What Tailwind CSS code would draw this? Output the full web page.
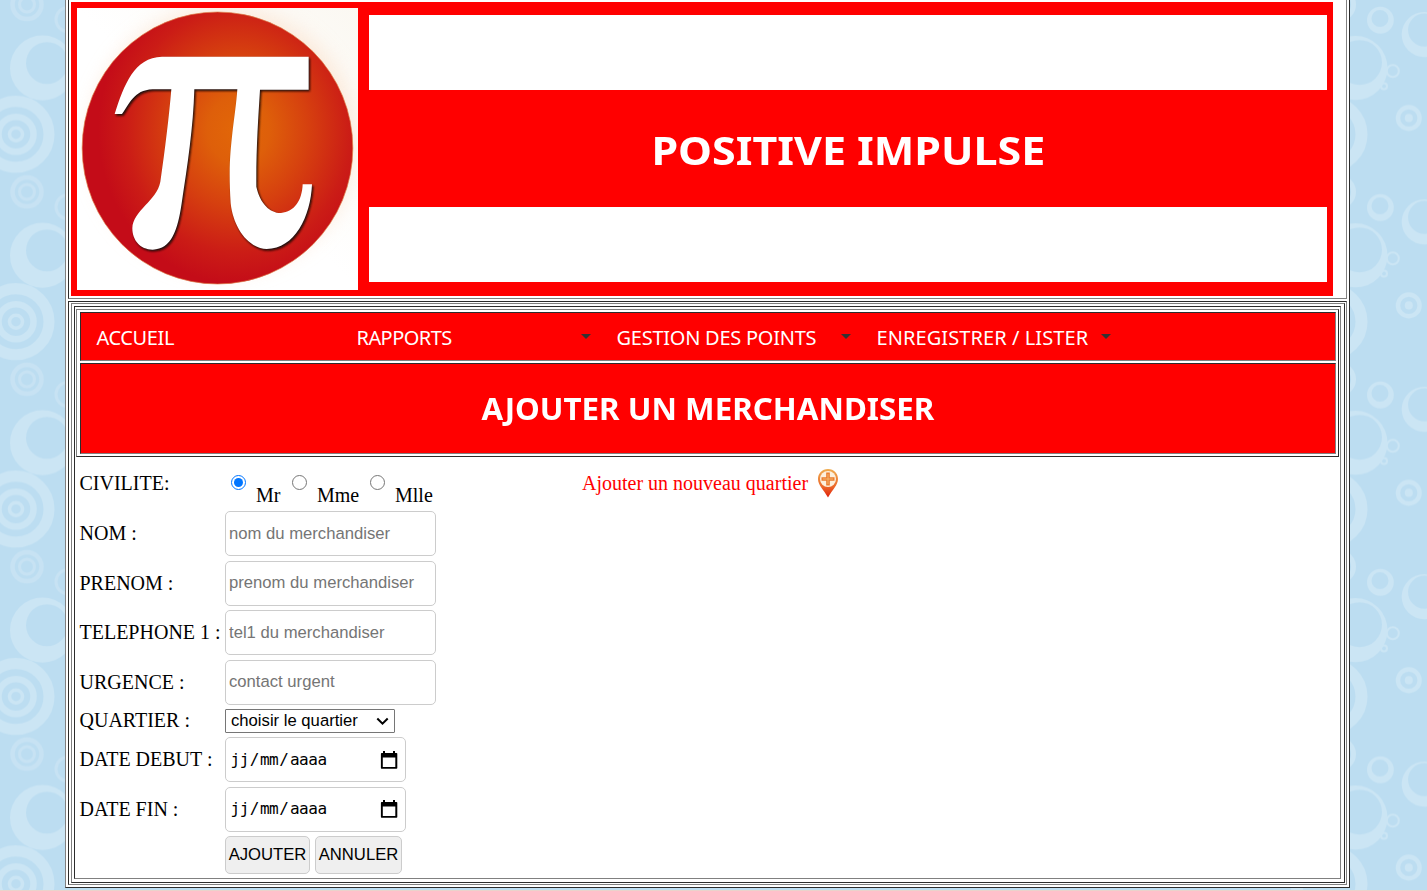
<!DOCTYPE html>
<html lang="fr">
<head>
<meta charset="utf-8">
<title>Positive Impulse</title>
<script src="https://cdn.jsdelivr.net/npm/@tailwindcss/browser@4"></script>
</head>
<body class="relative h-[891px] overflow-hidden bg-[#bcddf1] font-['Liberation_Serif',serif] text-[20px] leading-[23px] text-black">
<!-- Bubble wallpaper -->
<svg class="absolute inset-0 -z-10" width="1427" height="891" aria-hidden="true">
  <defs>
    <pattern id="bubbles" width="1427" height="187.4" patternUnits="userSpaceOnUse">
      <g fill="none" stroke="#cbe5f4">
        <circle cx="16" cy="134.3" r="33" stroke-width="11"/>
        <circle cx="16" cy="134.3" r="17.5" stroke-width="6.5"/>
        <circle cx="16" cy="134.3" r="6.5" stroke-width="3.5"/>
        <g stroke="#c7e2f3"><circle cx="27" cy="4.5" r="14.5" stroke-width="4.5"/><circle cx="27" cy="4.5" r="7.5" stroke-width="3"/>
        <circle cx="27" cy="191.9" r="14.5" stroke-width="4.5"/><circle cx="27" cy="191.9" r="7.5" stroke-width="3"/>
        <circle cx="68" cy="19.5" r="12" stroke-width="3"/></g>
        <circle cx="1329" cy="134.3" r="32.5" stroke-width="12"/>
        <circle cx="1339" cy="4.5" r="14.5" stroke-width="5"/><circle cx="1339" cy="191.9" r="14.5" stroke-width="5"/>
        <circle cx="1392.8" cy="71" r="6" stroke-width="2"/>
        <circle cx="1384" cy="86.2" r="3" stroke-width="2"/>
        <circle cx="1408.8" cy="118" r="10.8" stroke-width="4.4"/>
      </g>
      <g fill="#cbe5f4" fill-rule="evenodd">
        <path d="M10 68a32.5 32.5 0 1 0 65 0a32.5 32.5 0 1 0-65 0zM26 63a21 21 0 1 0 42 0a21 21 0 1 0-42 0z"/>
        <path d="M1323.500 68a32 32 0 1 0 64 0a32 32 0 1 0-64 0zM1337 62.500a22.500 22.500 0 1 0 45 0a22.500 22.500 0 1 0-45 0z"/>
        <path d="M1401.700 34.500a22.500 22.500 0 1 0 45 0a22.500 22.500 0 1 0-45 0zM1408 30a16.500 16.500 0 1 0 33 0a16.500 16.500 0 1 0-33 0z"/>
        <path d="M1367 20.200a13.400 13.400 0 1 0 26.800 0a13.400 13.400 0 1 0-26.800 0zM1371.500 18.500a8.500 8.500 0 1 0 17 0a8.500 8.500 0 1 0-17 0z"/>
        <circle cx="1408.800" cy="118" r="4"/>
      </g>
    </pattern>
  </defs>
  <rect width="1427" height="891" fill="url(#bubbles)"/>
  <rect y="890" width="1427" height="1" fill="#ead3cb"/>
</svg>

<div class="ml-[65px] flex h-[888px] w-[1285px] flex-col border-r border-b border-l border-[#2c2c2c] border-l-[#808080] bg-white pl-[2px]">
  <!-- Banner -->
  <header class="h-[299px] w-[1279px] shrink-0 border-r border-b border-l border-[#808080] border-l-[#2c2c2c] pt-[2px] pl-[2px]">
    <div class="flex h-[294px] w-[1262px] gap-[11px] bg-[#ff0000] p-[6px]">
      <svg class="shrink-0" width="281" height="282" viewBox="231 24 843 846" preserveAspectRatio="none" role="img">
        <defs>
          <radialGradient id="disc" gradientUnits="userSpaceOnUse" cx="715" cy="390" r="420" gradientTransform="translate(0 -39) scale(1 1.100)">
            <stop offset="0" stop-color="#e26708"/><stop offset=".22" stop-color="#de5f0a"/><stop offset=".5" stop-color="#d6400f"/><stop offset=".8" stop-color="#cb1c16"/><stop offset="1" stop-color="#c40c18"/>
          </radialGradient>
          <linearGradient id="paper" x1="0" y1="1" x2="1" y2="0"><stop offset="0.500" stop-color="#fff"/><stop offset="1" stop-color="#fbf8f2"/></linearGradient>
          <filter id="soft"><feGaussianBlur stdDeviation="2.500"/></filter>
          <filter id="glow"><feGaussianBlur stdDeviation="28"/></filter>
          <path id="pi" d="M344 342C372 255 402 172 486 170H926V269H780C775 350 768 450 769 560C780 612 812 640 843 639C883 636 906 602 908 553H936C932 650 884 747 800 747C745 745 700 684 692 610C685 500 692 450 697 400C703 350 709 310 712 268H583C580 380 562 500 545 610C533 690 515 748 458 749C420 749 397 720 397 685C399 630 470 604 481 545C495 450 507 350 514 268H458C400 270 388 315 366 342Z"/>
        </defs>
        <rect x="231" y="24" width="843" height="846" fill="url(#paper)"/>
        <circle cx="670" cy="420" r="400" fill="#fbe3cf" opacity=".7" filter="url(#glow)"/>
        <ellipse cx="652.500" cy="444" rx="406" ry="408" fill="url(#disc)" stroke="#dc7a45" stroke-width="2"/>
        <use href="#pi" x="4" y="5" fill="#1d0b07" filter="url(#soft)"/>
        <use href="#pi" fill="#fff"/>
      </svg>
      <div class="flex w-[958px] flex-col justify-between pt-[7px] pb-[8px]">
        <div class="h-[75px] bg-white"></div>
        <h1 class="flex justify-center pt-[2px] font-['Noto_Sans',sans-serif] text-[40px] leading-[50px] font-bold text-white"><span class="inline-block scale-x-[1.074]">POSITIVE IMPULSE</span></h1>
        <div class="h-[75px] bg-white"></div>
      </div>
    </div>
  </header>

  <!-- Body -->
  <main class="mt-[2px] h-[584px] w-[1279px] shrink-0 border border-[#2c2c2c] border-r-[#808080] border-b-[#808080] pt-px pl-[2px]">
    <div class="h-[580px] w-[1274px] border border-[#808080] border-r-[#2c2c2c] border-b-[#2c2c2c] pt-[2px] pl-[2px]">
      <div class="h-[573px] w-[1267px] border border-[#2c2c2c] border-r-[#808080] border-b-[#808080] pt-[2px] pl-px">
        <div class="flex h-[148px] w-[1263px] flex-col gap-[2px] border border-[#808080] border-r-[#2c2c2c] border-b-[#2c2c2c] pt-[2px] pl-[3px] font-['Noto_Sans',sans-serif] text-white">
          <nav class="flex h-[49px] w-[1256px] items-center border border-[#2c2c2c] border-r-[#808080] border-b-[#808080] bg-[#ff0000] pt-[2px] pl-[15.500px] text-[20px]">
            <div class="w-[260px]"><span class="tracking-[-0.4px]">ACCUEIL</span></div>
            <div class="flex w-[260px] items-center justify-between pr-[26px]"><span class="tracking-[-0.550px]">RAPPORTS</span><span class="-mt-[3px] border-x-[5px] border-t-[5px] border-x-transparent border-t-[#333]"></span></div>
            <div class="flex w-[260px] items-center justify-between pr-[26px]"><span class="tracking-[-0.250px]">GESTION DES POINTS</span><span class="-mt-[3px] border-x-[5px] border-t-[5px] border-x-transparent border-t-[#333]"></span></div>
            <div class="flex w-[260px] items-center justify-between pr-[26px]"><span class="tracking-[0.080px]">ENREGISTRER / LISTER</span><span class="-mt-[3px] border-x-[5px] border-t-[5px] border-x-transparent border-t-[#333]"></span></div>
          </nav>
          <div class="flex h-[91px] w-[1256px] items-center justify-center border border-[#2c2c2c] border-r-[#808080] border-b-[#808080] bg-[#ff0000]">
            <h2 class="scale-x-[1.044] text-[30px] leading-[36px] font-bold">AJOUTER UN MERCHANDISER</h2>
          </div>
        </div>

        <form class="pl-[3.500px]">
          <div class="flex h-[54px]">
            <div class="w-[145.500px] pt-[15px]">CIVILITE:</div>
            <div class="flex w-[357px] pt-[18px]">
              <input type="radio" name="civ" checked class="ml-[6px] size-[15px]"><label class="mt-[9px] ml-[10px] w-[36px]">Mr</label>
              <input type="radio" name="civ" class="size-[15px]"><label class="mt-[9px] ml-[10px] w-[53px]">Mme</label>
              <input type="radio" name="civ" class="size-[15px]"><label class="mt-[9px] ml-[10px]">Mlle</label>
            </div>
            <a class="flex items-start gap-[9px] text-[#ff0000]"><span class="pt-[15px]">Ajouter un nouveau quartier</span>
              <svg class="mt-[11px]" width="22" height="30" viewBox="0 0 22 30" aria-hidden="true">
                <defs><linearGradient id="pin" x1="0" y1="0" x2="0" y2="1"><stop offset="0" stop-color="#efad50"/><stop offset=".6" stop-color="#ec6a2a"/><stop offset="1" stop-color="#e0200c"/></linearGradient></defs>
                <path d="M11 1C5 1 1 5.500 1 11C1 17 6.500 21.500 11 29.500C15.500 21.500 21 17 21 11C21 5.500 17 1 11 1Z" fill="url(#pin)"/>
                <circle cx="11" cy="11" r="8" fill="#fdf0dc"/>
                <path d="M11 4.500v13M4.500 11h13" stroke="#ea7a2c" stroke-width="3.600"/><path d="M11 5.800v10.400M5.800 11h10.400" stroke="#f5b66c" stroke-width="1"/>
              </svg>
            </a>
          </div>
          <div class="flex h-[50px]"><label class="w-[145.500px] pt-[11px]">NOM :</label><input placeholder="nom du merchandiser" class="h-[45px] w-[211px] rounded-[5px] border border-[#ccc] px-[3px] font-['Liberation_Sans',sans-serif] text-[16.670px] placeholder:text-[#757575]"></div>
          <div class="flex h-[49px]"><label class="w-[145.500px] pt-[11px]">PRENOM :</label><input placeholder="prenom du merchandiser" class="h-[45px] w-[211px] rounded-[5px] border border-[#ccc] px-[3px] pb-[2px] font-['Liberation_Sans',sans-serif] text-[16.670px] placeholder:text-[#757575]"></div>
          <div class="flex h-[50px]"><label class="w-[145.500px] pt-[11px] whitespace-nowrap">TELEPHONE 1 :</label><input placeholder="tel1 du merchandiser" class="h-[45px] w-[211px] rounded-[5px] border border-[#ccc] px-[3px] font-['Liberation_Sans',sans-serif] text-[16.670px] placeholder:text-[#757575]"></div>
          <div class="flex h-[49px]"><label class="w-[145.500px] pt-[11px]">URGENCE :</label><input placeholder="contact urgent" class="h-[45px] w-[211px] rounded-[5px] border border-[#ccc] px-[3px] pb-[2px] font-['Liberation_Sans',sans-serif] text-[16.670px] placeholder:text-[#757575]"></div>
          <div class="flex h-[28px]"><label class="w-[145.500px]">QUARTIER :</label>
            <div class="flex h-[24px] w-[170px] items-center justify-between rounded-[1px] border border-[#767676] pr-[5px] pl-[5px] font-['Liberation_Sans',sans-serif] text-[16.670px] leading-[20px]"><span>choisir le quartier</span>
              <svg class="mt-px" width="13" height="9" viewBox="0 0 13 9" fill="none" stroke="#000" stroke-width="2"><path d="M1.300 1.500l5.200 5.200l5.200-5.200"/></svg></div>
          </div>
          <div class="flex h-[50px]"><label class="w-[145.500px] pt-[11px]">DATE DEBUT :</label>
            <div class="flex h-[45px] w-[181px] items-center justify-between rounded-[5px] border border-[#ccc] pr-[7px] pl-[3.500px] font-['DejaVu_Sans_Mono',monospace] text-[16px] tracking-[-0.480px]"><span class="flex"><span class="px-px">jj</span>/<span class="px-px">mm</span>/<span class="pr-px pl-[1.500px]">aaaa</span></span>
              <svg width="18" height="18" viewBox="0 0 18 18"><path d="M3 0h2v2h8V0h2v2h1.500q.8 0 .8.800V17q0 .8-.8.800h-15Q.9 17.800.9 17V2.800Q.9 2 1.700 2H3zM2.800 6.500v9.500h12.500V6.500z" fill="#000" fill-rule="evenodd"/></svg></div>
          </div>
          <div class="flex h-[49px]"><label class="w-[145.500px] pt-[11px]">DATE FIN :</label>
            <div class="flex h-[45px] w-[181px] items-center justify-between rounded-[5px] border border-[#ccc] pr-[7px] pb-[2px] pl-[3.500px] font-['DejaVu_Sans_Mono',monospace] text-[16px] tracking-[-0.480px]"><span class="flex"><span class="px-px">jj</span>/<span class="px-px">mm</span>/<span class="pr-px pl-[1.500px]">aaaa</span></span>
              <svg width="18" height="18" viewBox="0 0 18 18"><path d="M3 0h2v2h8V0h2v2h1.500q.8 0 .8.800V17q0 .8-.8.800h-15Q.9 17.800.9 17V2.800Q.9 2 1.700 2H3zM2.800 6.500v9.500h12.500V6.500z" fill="#000" fill-rule="evenodd"/></svg></div>
          </div>
          <div class="flex gap-[5px] pl-[145.500px] font-['Liberation_Sans',sans-serif] text-[16.670px]">
            <button type="button" class="h-[38px] w-[85px] rounded-[5px] border border-[#ccc] bg-[#efefef] pb-[2px]">AJOUTER</button>
            <button type="button" class="h-[38px] w-[87px] rounded-[5px] border border-[#ccc] bg-[#efefef] pb-[2px]">ANNULER</button>
          </div>
        </form>
      </div>
    </div>
  </main>
</div>
</body>
</html>
